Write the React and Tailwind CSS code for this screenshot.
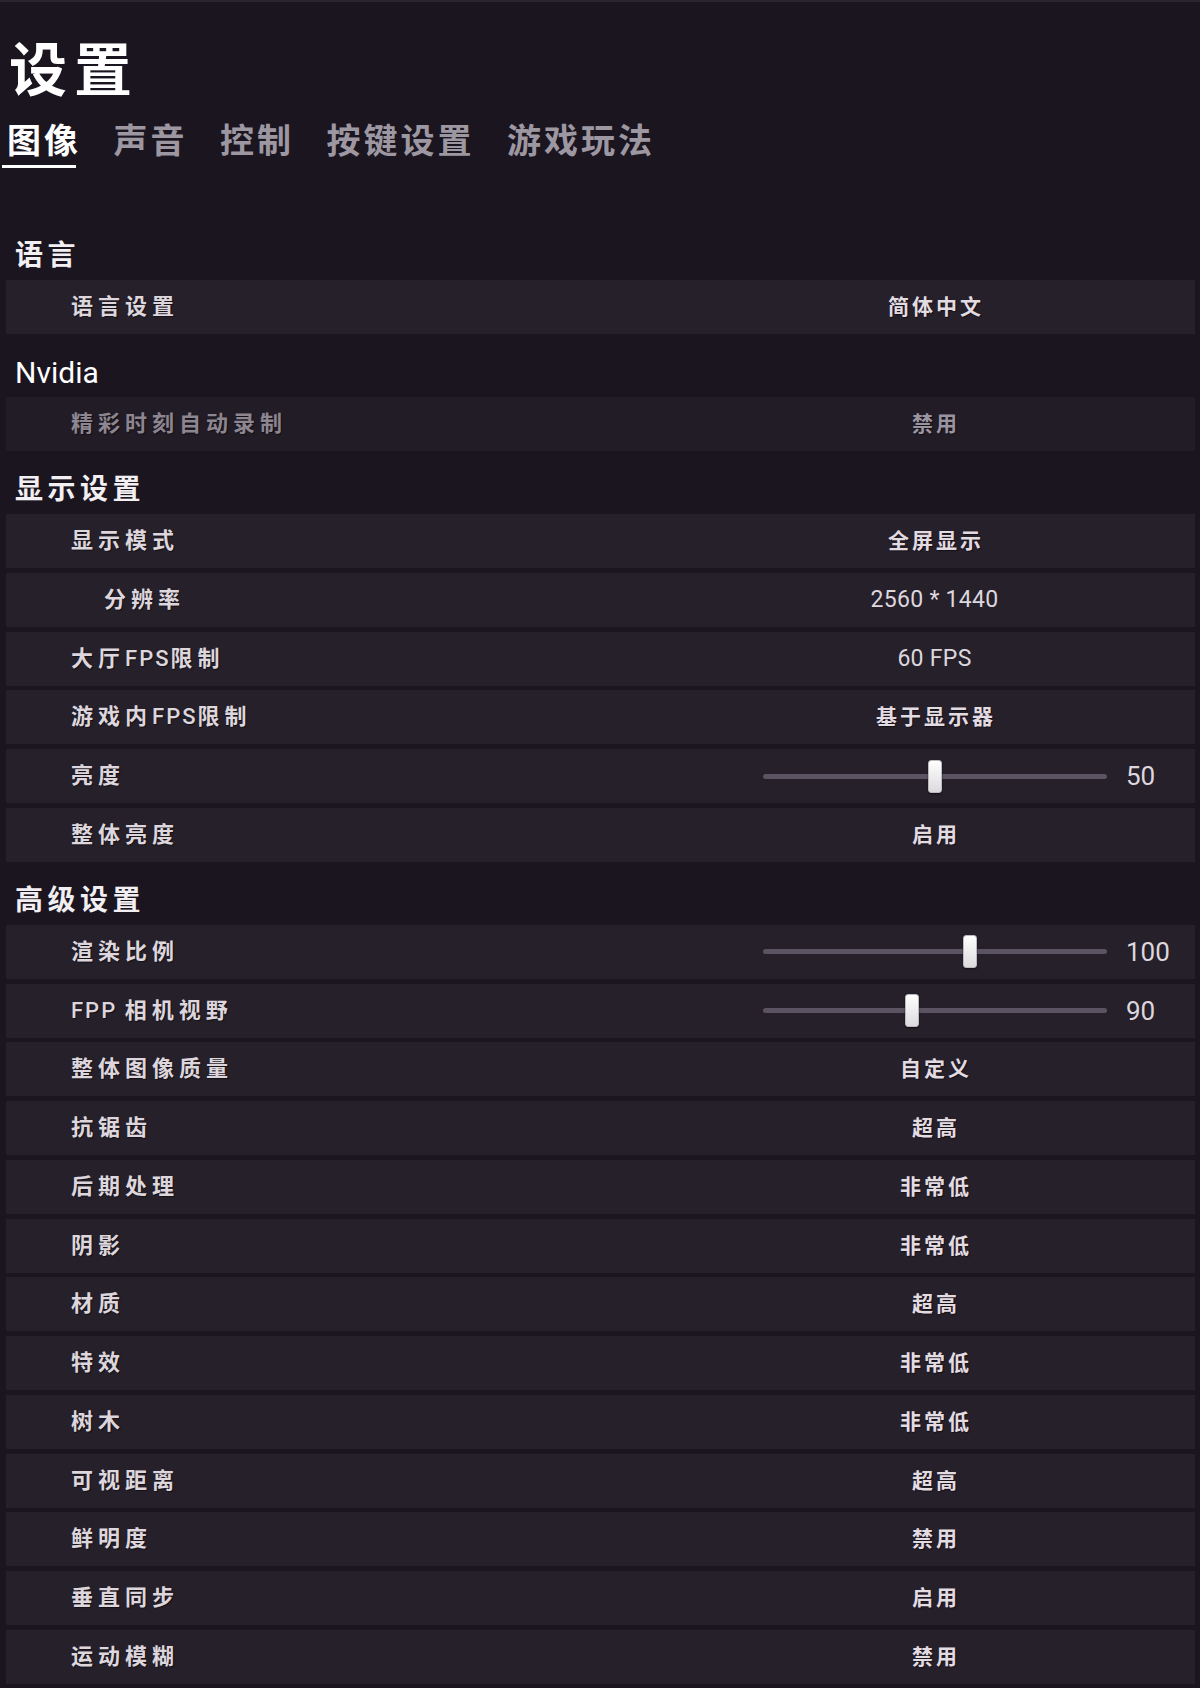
import React from 'react'

const tabs = ['图像', '声音', '控制', '按键设置', '游戏玩法']

const sections = [
  {
    title: '语言',
    rows: [{ label: '语言设置', value: '简体中文' }],
  },
  {
    title: 'Nvidia',
    latin: true,
    rows: [{ label: '精彩时刻自动录制', value: '禁用', disabled: true }],
  },
  {
    title: '显示设置',
    rows: [
      { label: '显示模式', value: '全屏显示' },
      { label: '分辨率', value: '2560 * 1440', latin: true, indent: true },
      { label: '大厅FPS限制', value: '60 FPS', latin: true },
      { label: '游戏内FPS限制', value: '基于显示器' },
      { label: '亮度', slider: 0.5, num: '50' },
      { label: '整体亮度', value: '启用' },
    ],
  },
  {
    title: '高级设置',
    rows: [
      { label: '渲染比例', slider: 0.602, num: '100' },
      { label: 'FPP 相机视野', slider: 0.436, num: '90' },
      { label: '整体图像质量', value: '自定义' },
      { label: '抗锯齿', value: '超高' },
      { label: '后期处理', value: '非常低' },
      { label: '阴影', value: '非常低' },
      { label: '材质', value: '超高' },
      { label: '特效', value: '非常低' },
      { label: '树木', value: '非常低' },
      { label: '可视距离', value: '超高' },
      { label: '鲜明度', value: '禁用' },
      { label: '垂直同步', value: '启用' },
      { label: '运动模糊', value: '禁用' },
    ],
  },
]

// latin runs in the labels are not spaced out like the hanzi
function Label({ text }) {
  return text.split(/([A-Za-z]+ ?)/).filter(Boolean).map((part, i) =>
    /[A-Za-z]/.test(part)
      ? <span key={i} className="tracking-[2px] font-medium">{part}</span>
      : <span key={i}>{part}</span>
  )
}

function Slider({ pos }) {
  return (
    <div className="relative h-[33px] w-full">
      <div className="absolute left-[1px] right-0 top-[14px] h-[5px] rounded-full bg-[#5b5361]" />
      <div
        className="absolute top-0 h-[33px] w-[14px] -ml-[7px] rounded-[3px] border border-[#bdbabf] bg-gradient-to-b from-white to-[#dcdadd] shadow-[0_1px_2px_rgba(0,0,0,0.6)]"
        style={{ left: `${pos * 100}%` }}
      />
    </div>
  )
}

function Row({ row }) {
  return (
    <div className={`ml-[6px] mr-[5px] h-[54px] flex items-center ${row.disabled ? 'bg-[#221c27]' : 'bg-[#26202b]'}`}>
      <div
        className={`flex-1 text-[22px] leading-[28px] font-semibold tracking-[5px] [text-shadow:1px_1px_1px_rgba(0,0,0,0.5)] ${row.indent ? 'pl-[98px]' : 'pl-[65px]'} ${row.disabled ? 'text-[#8d8691]' : 'text-[#ddd6dd]'}`}
      >
        <Label text={row.label} />
      </div>
      <div className="w-[345px] flex justify-center items-center">
        {row.slider !== undefined ? (
          <Slider pos={row.slider} />
        ) : row.latin ? (
          <span className="text-[23px] leading-[28px] text-[#ddd7dd] tracking-[0.3px]">{row.value}</span>
        ) : (
          <span className={`text-[21px] leading-[28px] font-semibold tracking-[3px] pl-[3px] [text-shadow:1px_1px_1px_rgba(0,0,0,0.5)] ${row.disabled ? 'text-[#9a94a0]' : 'text-[#e2dce2]'}`}>
            {row.value}
          </span>
        )}
      </div>
      <div className="w-[88px] pl-[19px] text-[26px] leading-[30px] text-[#ddd7dd]">
        {row.num}
      </div>
    </div>
  )
}

function App() {
  return (
    <div className="min-h-[1688px] w-[1200px] bg-[#1b1520] border-t-2 border-[#2a2530] font-['Roboto','Noto_Sans_CJK_SC',sans-serif] overflow-hidden">
      {/* Title */}
      <h1 className="pt-[40px] pl-[9px] text-[58px] leading-[58px] font-bold tracking-[7px] text-white">设置</h1>

      {/* Tabs */}
      <div className="mt-[21px] pl-[7px] flex gap-[32.5px]">
        {tabs.map((t, i) => (
          <div key={t} className="flex flex-col">
            <span className={`text-[34px] leading-[40px] font-semibold tracking-[3px] ${i === 0 ? 'text-white' : 'text-[#9d97a1]'}`}>{t}</span>
            {i === 0 && <div className="mt-[4px] -ml-[5px] w-[74px] h-[3px] bg-white" />}
          </div>
        ))}
      </div>
      <div className="h-[49px]" />

      {sections.map((s) => (
        <div key={s.title}>
          <div className="h-[63px] pt-[25px] pl-[15px]">
            {s.latin ? (
              <span className="text-[30px] leading-[28px] text-white">{s.title}</span>
            ) : (
              <span className="text-[28px] leading-[28px] font-bold tracking-[4.5px] text-[#f2eff2]">{s.title}</span>
            )}
          </div>
          <div className="flex flex-col gap-[4.75px]">
            {s.rows.map((r) => (
              <Row key={r.label} row={r} />
            ))}
          </div>
        </div>
      ))}
    </div>
  )
}

export default App
